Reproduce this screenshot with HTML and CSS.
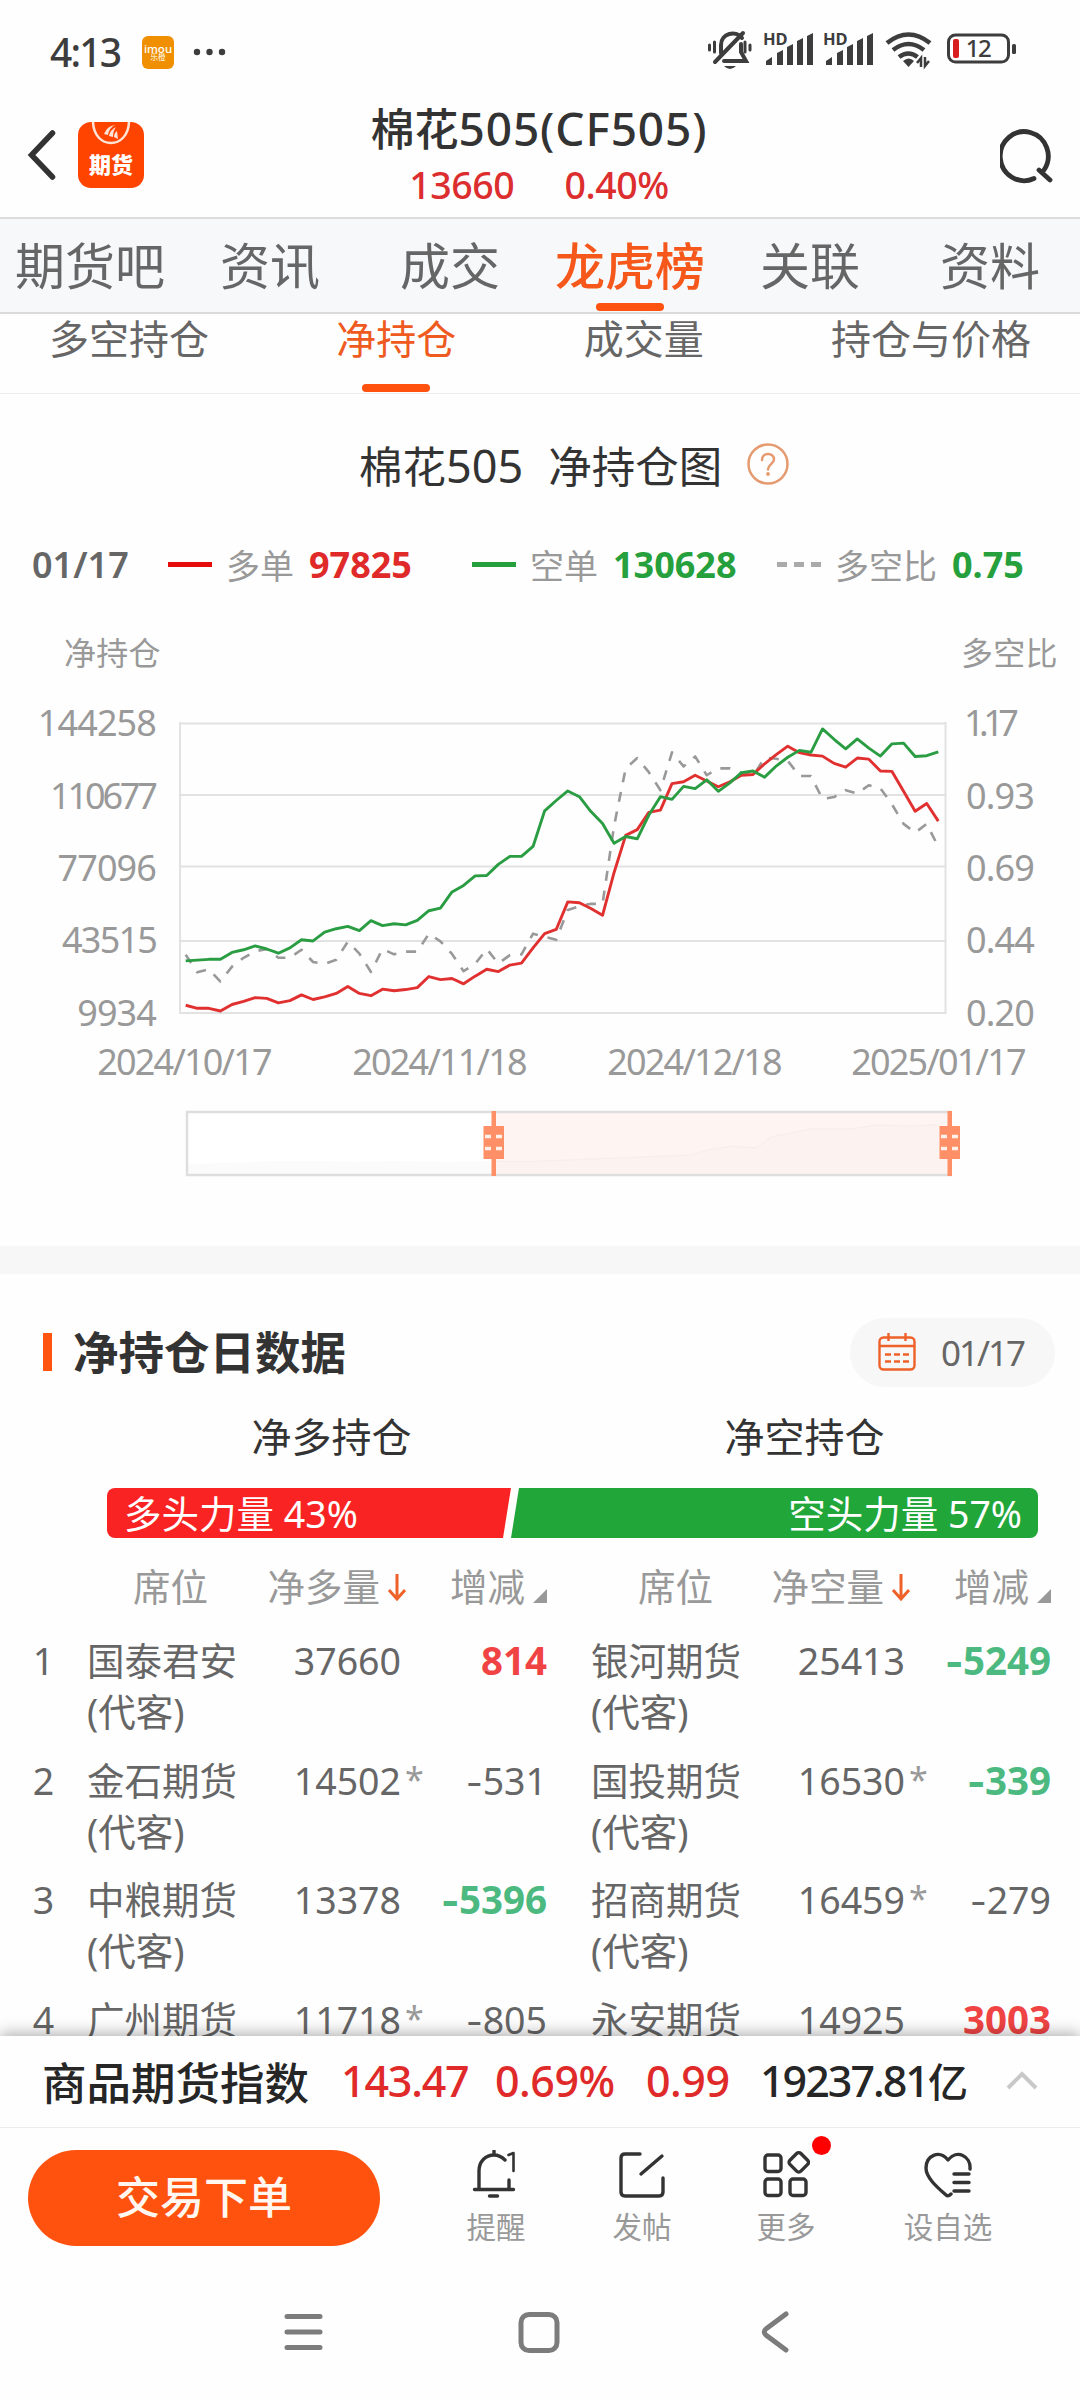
FILE: index.html
```
<!DOCTYPE html>
<html lang="zh-CN">
<head>
    <meta charset="UTF-8">
    <title>棉花505(CF505)</title>
    <link rel="stylesheet" href="styles.css">
</head>
<body>
    <div class="statusbar">
        <span class="time">4:13</span>
        <span class="imou"><b>imou</b><i>乐橙</i></span>
        <svg class="dots" width="34" height="8"><circle cx="4" cy="4" r="3.2"/><circle cx="16.500" cy="4" r="3.200"/><circle cx="29" cy="4" r="3.200"/></svg>
        <svg class="sysicons" width="312" height="50" viewBox="0 -8 312 50">
            <g fill="none" stroke="#3d3d3d" stroke-width="4" stroke-linecap="round">
                <path d="M1.500 14v5M6.500 11v10M37 11v10M42 14v5" stroke-width="3"/>
                <path d="M13 22v-8c0-12 15-15 21-7M33 13v8l5 9H16"/>
                <path d="M7 31L35 2"/>
            </g>
            <path d="M16 35h12q-6 6-12 0z" fill="#3d3d3d"/>
            <text class="hd" x="55" y="14">HD</text>
            <text class="hd" x="115" y="14">HD</text>
            <g fill="#3d3d3d">
                <path id="sig" d="M58 34v-4l6-4v8zM69 34V22l6-3v15zM79 34V16l6-3v21zM89 34v-24l6-3v27zM99 34V5l6-3v32z"/>
                <use href="#sig" x="60"/>
                <path d="M195 30q6-5 11 0l-5.500 6z"/>
            </g>
            <g fill="none" stroke="#3d3d3d" stroke-width="4.500">
                <path d="M179 12q21.500-17 43 0M185 19q15.500-12 31 0M191 26q9.500-7 18.500 0"/>
                <path d="M213 36v-9l-4 5M217 26v9l4-5" stroke-width="2.500"/>
                <rect x="240.500" y="4" width="60" height="27" rx="7" stroke-width="3"/>
            </g>
            <rect x="245" y="8" width="6" height="19" rx="2" fill="#d81e1e"/>
            <rect x="304" y="13" width="4" height="10" rx="1.500" fill="#3d3d3d"/>
            <text class="bat" x="270" y="26" text-anchor="middle">12</text>
        </svg>
    </div>

    <div class="header">
        <svg class="back" width="30" height="52" viewBox="0 0 30 52"><path d="M26.500 4L5.500 26l21 22" fill="none" stroke="#333" stroke-width="5.500" stroke-linecap="round"/></svg>
        <div class="logo">
            <svg width="66" height="24" viewBox="0 0 66 24"><path d="M15 0c1 28 35 28 36 0" fill="none" stroke="#ffe3d6" stroke-width="2.500"/><path d="M26 12q3-8 11-9-6 3-7 10zM31 14q1-6 7-9-3 4-3 10zM36 15q0-4 3-6l1 8z" fill="#ffe3d6"/></svg>
            <span>期货</span>
        </div>
        <div class="quote">
            <div class="name">棉花<span>505(CF505)</span></div>
            <div class="price"><span>13660</span><span>0.40%</span></div>
        </div>
        <svg class="search" width="54" height="56" viewBox="0 0 54 56"><path d="M34 49.500A24 24.500 0 1 1 44 41M39 41l11 10" fill="none" stroke="#333" stroke-width="4.800" stroke-linecap="round" stroke-linejoin="round"/></svg>
    </div>

    <div class="tabs">
        <span>期货吧</span>
        <span>资讯</span>
        <span>成交</span>
        <span class="active">龙虎榜</span>
        <span>关联</span>
        <span>资料</span>
    </div>

    <div class="subtabs">
        <span>多空持仓</span>
        <span class="active">净持仓</span>
        <span>成交量</span>
        <span>持仓与价格</span>
    </div>

    <div class="content">
        <div class="chart-title">
            <span>棉花<em>505</em></span>
            <span>净持仓图</span>
            <svg width="42" height="42" viewBox="0 0 42 42"><circle cx="21" cy="21" r="19.500" fill="none" stroke="#e59a70" stroke-width="2.500"/><path d="M15 17c0-8 12-8 12-.5 0 4-6 5-6 10" fill="none" stroke="#e59a70" stroke-width="2.500" stroke-linecap="round"/><circle cx="21" cy="31" r="1.900" fill="#e59a70"/></svg>
        </div>

        <div class="legend">
            <b class="date">01/17</b>
            <i class="line red-bg"></i><span>多单</span><b class="red v1">97825</b>
            <i class="line green-bg"></i><span>空单</span><b class="green v2">130628</b>
            <i class="line dashed"></i><span>多空比</span><b class="green">0.75</b>
        </div>

        <svg class="chart" width="1080" height="646" viewBox="0 0 1080 646">
            <text x="64" y="65" class="cn">净持仓</text>
            <text x="961" y="65" class="cn">多空比</text>

            <path class="grid" d="M179 123.500H946M179 195H946M179 266.500H946M179 341H946M179 413H946M180 122V414M945.500 122V414"/>

            <g text-anchor="end">
                <text x="156" y="135.500">144258</text>
                <text x="157" y="208.500" textLength="107">110677</text>
                <text x="156" y="280.500">77096</text>
                <text x="157" y="352.500" textLength="95">43515</text>
                <text x="156" y="425.500">9934</text>
            </g>
            <g>
                <text x="964" y="135.500" textLength="54">1.17</text>
                <text x="966" y="208.500">0.93</text>
                <text x="966" y="280.500">0.69</text>
                <text x="966" y="352.500">0.44</text>
                <text x="966" y="425.500">0.20</text>
            </g>
            <g class="days" text-anchor="middle">
                <text x="184" y="475">2024/10/17</text>
                <text x="439" y="475">2024/11/18</text>
                <text x="694" y="475">2024/12/18</text>
                <text x="938" y="475">2025/01/17</text>
            </g>

            <!-- one x unit per trading day -->
            <svg class="plot" x="185.700" y="123.200" width="752.600" height="289.700" viewBox="0 322 65 757" preserveAspectRatio="none">
                <polyline class="ratio" points="0,927 1,973 2,965 3,997 4,958 5,935 6,918 7,912 8,935 9,935 10,914 11,946 12,951 13,940 14,893 15,924 16,972 17,912 18,926 19,919 20,919 21,872 22,892 23,925 24,970 25,951 26,912 27,950 28,928 29,926 30,872 31,880 32,888 33,810 34,800 35,794 36,794 37,590 38,440 39,413 40,450 41,497 42,398 43,435 44,409 45,458 46,440 47,440 48,452 49,460 50,412 51,415 52,420 53,460 54,460 55,520 56,515 57,497 58,506 59,484 60,492 61,534 62,585 63,608 64,585 65,645"/>
                <polyline class="long" points="0,1059 1,1067 2,1067 3,1074 4,1057 5,1049 6,1039 7,1041 8,1053 9,1047 10,1032 11,1044 12,1037 13,1028 14,1010 15,1028 16,1034 17,1017 18,1021 19,1018 20,1013 21,984 22,992 23,989 24,1003 25,983 26,965 27,971 28,954 29,949 30,909 31,872 32,861 33,789 34,791 35,806 36,824 37,712 38,615 39,600 40,555 41,549 42,480 43,475 44,458 45,473 46,488 47,475 48,458 49,456 50,428 51,404 52,382 53,399 54,405 55,408 56,427 57,437 58,413 59,416 60,447 61,448 62,500 63,552 64,532 65,578"/>
                <polyline class="short" points="0,943 1,941 2,939 3,939 4,921 5,914 6,904 7,912 8,923 9,909 10,888 11,891 12,868 13,859 14,853 15,864 16,838 17,851 18,846 19,849 20,837 21,812 22,805 23,763 24,746 25,721 26,720 27,691 28,670 29,670 30,644 31,551 32,524 33,499 34,514 35,553 36,584 37,636 38,618 39,624 40,562 41,514 42,521 43,487 44,493 45,470 46,500 47,478 48,451 49,447 50,463 51,434 52,411 53,393 54,398 55,337 56,364 57,389 58,363 59,387 60,408 61,376 62,374 63,409 64,407 65,397"/>
            </svg>

            <!-- range slider -->
            <rect x="187" y="512" width="763" height="63" fill="#fff"/>
            <path d="M188 564l40-1 45-2 50 0 30 1 40-1 60 1 40-1v14H188z" fill="#fbfbfb"/>
            <rect x="494" y="512" width="456" height="63" fill="#fef5f3"/>
            <path d="M494 561l25 1 50-2 74-3 50-2 10-4 28-5 25 2 15-11 25-5 15-3 40 0 25-4 35 1 25-1 14 5v45H494z" fill="#fcf3f1" stroke="#f9eeeb" stroke-width="1.500"/>
            <rect x="187" y="512" width="763" height="63" fill="none" stroke="#dedede" stroke-width="2.500"/>
            <g id="handle">
                <path d="M491.500 511h4.500v65h-4.500zM483.500 526h20.500v33h-20.500z" fill="#ff8f66"/>
                <path d="M485 536.500h6M496 536.500h6M485 548.500h6M496 548.500h6" stroke="#fff1ea" stroke-width="3.500"/>
            </g>
            <use href="#handle" x="456"/>
        </svg>

        <div class="divider"></div>

        <div class="section-head">
            <h2>净持仓日数据</h2>
            <div class="datepick">
                <svg width="38" height="38" viewBox="0 0 38 38" fill="none" stroke="#ee6128" stroke-width="2.400"><rect x="1.500" y="4.500" width="35" height="32" rx="4"/><path d="M1.500 13h35M10.500 0v8M27.500 0v8"/><path d="M7 21.500h24M7 28.500h24" stroke-dasharray="6 3"/></svg>
                <span>01/17</span>
            </div>
        </div>

        <div class="sides"><span>净多持仓</span><span>净空持仓</span></div>

        <div class="power">
            <div class="bull">多头力量 43%</div>
            <div class="bear">空头力量 57%</div>
        </div>

        <div class="row head">
            <span></span>
            <span class="seat">席位</span>
            <span class="vol">净多量<svg width="20" height="28" viewBox="0 0 20 28"><path d="M10 1v24M2 17l8 9 8-9"/></svg></span>
            <span class="chg">增减<i class="tri"></i></span>
            <span class="seat second">席位</span>
            <span class="vol">净空量<svg width="20" height="28" viewBox="0 0 20 28"><path d="M10 1v24M2 17l8 9 8-9"/></svg></span>
            <span class="chg">增减<i class="tri"></i></span>
        </div>
        <div class="row">
            <span class="no">1</span>
            <span>国泰君安<br>(代客)</span><span class="vol">37660</span><span class="chg up">814</span>
            <span class="second">银河期货<br>(代客)</span><span class="vol">25413</span><span class="chg down"><em>-</em>5249</span>
        </div>
        <div class="row">
            <span class="no">2</span>
            <span>金石期货<br>(代客)</span><span class="vol star">14502</span><span class="chg"><em>-</em>531</span>
            <span class="second">国投期货<br>(代客)</span><span class="vol star">16530</span><span class="chg down"><em>-</em>339</span>
        </div>
        <div class="row">
            <span class="no">3</span>
            <span>中粮期货<br>(代客)</span><span class="vol">13378</span><span class="chg down"><em>-</em>5396</span>
            <span class="second">招商期货<br>(代客)</span><span class="vol star">16459</span><span class="chg"><em>-</em>279</span>
        </div>
        <div class="row">
            <span class="no">4</span>
            <span>广州期货</span><span class="vol star">11718</span><span class="chg"><em>-</em>805</span>
            <span class="second">永安期货</span><span class="vol">14925</span><span class="chg up">3003</span>
        </div>
    </div>

    <div class="index">
        <span class="iname">商品期货指数</span>
        <span class="red i1">143.47</span>
        <span class="red i2">0.69%</span>
        <span class="red i3">0.99</span>
        <span class="i4">19237.81<em>亿</em></span>
        <svg width="32" height="22" viewBox="0 0 32 22"><path d="M2 19L16 5l14 14" fill="none" stroke="#c8c8c8" stroke-width="4"/></svg>
    </div>

    <div class="actions">
        <div class="order">交易下单</div>
        <div class="act a1">
            <svg viewBox="0 0 48 48"><path d="M7 38V21c0-10 7-16 15-16 4 0 8 2 11 5M22 1v4M2.500 39.500h39M37 30v9M17.500 46h8"/><path d="M36.500 5l5-2v18" stroke-width="2.600"/></svg>
            <span>提醒</span>
        </div>
        <div class="act a2">
            <svg viewBox="0 0 48 48"><path d="M22 4H7q-4 0-4 4v34q0 4 4 4h34q4 0 4-4V28M23 24L44 6"/></svg>
            <span>发帖</span>
        </div>
        <div class="act a3">
            <svg viewBox="0 0 48 48"><rect x="3" y="5" width="16" height="16.500" rx="3"/><rect x="3" y="29" width="16" height="16.500" rx="3"/><rect x="28" y="29" width="16" height="16.500" rx="3"/><rect x="29" y="4.500" width="15.500" height="15.500" rx="3" transform="rotate(45 36.700 12.300)"/></svg>
            <span>更多</span>
            <i class="badge"></i>
        </div>
        <div class="act a4">
            <svg viewBox="0 0 48 48"><path d="M46 19C47 6 33-1 24 10 15-1 2 6 2 18c0 10 12 20 20 27q2 2 5-1M30 24h15M30 32.500h15M30 41h15"/></svg>
            <span>设自选</span>
        </div>
    </div>

    <div class="navbar">
        <svg viewBox="0 0 44 44"><path d="M5 6.500h33M5 22h33M5 37.500h33"/></svg>
        <svg viewBox="0 0 44 44"><rect x="3" y="4.500" width="36" height="36" rx="8"/></svg>
        <svg viewBox="0 0 44 44"><path d="M32 4L12.500 18.500q-4.500 3.500 0 7L32 40"/></svg>
    </div>
</body>
</html>
```
FILE: styles.css
```
* {
    box-sizing: border-box;
}

body {
    margin: 0;
    width: 1080px;
    height: 2400px;
    overflow: hidden;
    background-color: #fefefe;
    color: #333;
    font-family: "Noto Sans", "Noto Sans CJK SC", sans-serif;
    display: flex;
    flex-direction: column;
}

svg {
    display: block;
    flex-shrink: 0;
}

i, em {
    font-style: normal;
}

.red { color: #e02a2a; }
.green { color: #25a03c; }
.red-bg { background-color: #e60c0c; }
.green-bg { background-color: #25a03c; }

/* status bar */
.statusbar {
    height: 104px;
    padding: 0 14px 0 50px;
    display: flex;
    align-items: center;
    color: #3d3d3d;
}

.time {
    font-size: 39px;
    font-weight: 500;
    line-height: 40px;
    width: 92px;
    letter-spacing: -1.8px;
}

.imou {
    width: 32px;
    height: 33px;
    border-radius: 6px;
    background-color: #f09000;
    color: #fff;
    text-align: center;
    display: flex;
    flex-direction: column;
    justify-content: center;
}

.imou b {
    font-size: 11.5px;
    font-weight: 500;
    line-height: 9px;
}

.imou i {
    font-size: 7.5px;
    line-height: 8px;
}

.dots {
    margin-left: 19px;
    fill: #3d3d3d;
}

.sysicons {
    margin: -8px 46px 0 auto;
}

.hd {
    font-size: 16.5px;
    font-weight: 700;
    fill: #3d3d3d;
}

.bat {
    font-size: 24px;
    font-weight: 500;
    fill: #3d3d3d;
    letter-spacing: -1.5px;
}

/* header */
.header {
    height: 115px;
    border-bottom: 2px solid #dcdcdc;
    display: flex;
    align-items: flex-start;
    padding: 0 26px 0 26px;
}

.back {
    margin-top: 25px;
}

.logo {
    width: 66px;
    height: 66px;
    margin: 18px 0 0 22px;
    border-radius: 13px;
    background-color: #ff4400;
    color: #fff;
    text-align: center;
}

.logo span {
    display: block;
    font-size: 22px;
    font-weight: 900;
    line-height: 30px;
    margin-top: 3px;
}

.quote {
    flex: 1;
    text-align: center;
    padding-right: 66px;
}

.quote .name {
    font-size: 44px;
    font-weight: 500;
    line-height: 48px;
    height: 52px;
}

.quote .name span {
    font-size: 46px;
    letter-spacing: 0.9px;
}

.price {
    display: flex;
    justify-content: center;
    gap: 50px;
    font-size: 37.5px;
    font-weight: 500;
    line-height: 57px;
    letter-spacing: -0.4px;
    color: #dc2e2e;
}

.search {
    margin-top: 25px;
}

/* tabs */
.tabs {
    height: 95px;
    background-color: #f7f8fa;
    border-bottom: 2px solid #dadada;
    display: flex;
}

.tabs span {
    width: 180px;
    text-align: center;
    font-size: 50px;
    line-height: 95px;
    color: #666;
    position: relative;
}

.tabs .active {
    font-weight: 500;
    color: #f5581a;
}

.active::after {
    content: "";
    position: absolute;
    left: 50%;
    bottom: 1px;
    width: 68px;
    height: 8px;
    margin-left: -34px;
    border-radius: 4px;
    background-color: #ff520e;
}

.subtabs {
    height: 80px;
    border-bottom: 1px solid #ececec;
    padding: 0 49px;
    display: flex;
    justify-content: space-between;
}

.subtabs span {
    position: relative;
    font-size: 40px;
    line-height: 50px;
    color: #666;
}

.subtabs .active {
    color: #ee5a20;
}

/* chart */
.content {
    height: 1642px;
    overflow: hidden;
}

.chart-title {
    height: 140px;
    display: flex;
    align-items: center;
    padding-left: 359px;
    font-size: 43.5px;
}

.chart-title em {
    font-size: 45px;
}

.chart-title span {
    margin-right: 25px;
}

.legend {
    height: 66px;
    display: flex;
    align-items: center;
    padding-left: 32px;
    padding-bottom: 5px;
    font-size: 34px;
    color: #999;
}

.legend b {
    font-size: 36px;
    font-weight: 700;
}

.legend .date {
    width: 136px;
    font-weight: 600;
    color: #666;
    letter-spacing: 0;
}

.legend span {
    margin: 0 15px 0 14px;
}

.v1 { width: 163px; }
.v2 { width: 164px; }

.line {
    width: 44px;
    height: 5px;
}

.dashed {
    background: repeating-linear-gradient(90deg, #aaa 0 10px, transparent 10px 17px);
}

.chart text {
    font-size: 36px;
    letter-spacing: -0.9px;
    fill: #999;
}

.chart .cn {
    font-size: 32px;
    letter-spacing: 0.3px;
}

.chart .days text {
    letter-spacing: -1.8px;
}

.grid {
    fill: none;
    stroke: #e2e2e2;
    stroke-width: 2;
}

.plot {
    overflow: visible;
}

.plot polyline {
    fill: none;
    stroke-width: 2.9;
    stroke-linejoin: round;
    vector-effect: non-scaling-stroke;
}

.plot .ratio {
    stroke: #999;
    stroke-width: 2.6;
    stroke-dasharray: 10 10;
}

.plot .long { stroke: #e03030; }
.plot .short { stroke: #2a9d43; }

.divider {
    height: 28px;
    background-color: #f7f7f7;
}

/* daily data */
.section-head {
    height: 122px;
    padding: 34px 25px 0 43px;
    display: flex;
    justify-content: space-between;
    align-items: center;
}

.section-head h2 {
    margin: 0;
    font-size: 45.5px;
    line-height: 60px;
    font-weight: 700;
    display: flex;
    align-items: center;
}

.section-head h2::before {
    content: "";
    width: 9px;
    height: 38px;
    margin-right: 21px;
    background-color: #ff5511;
}

.datepick {
    width: 205px;
    height: 69px;
    border-radius: 35px;
    background-color: #f7f7f7;
    display: flex;
    align-items: center;
    padding-left: 28px;
    gap: 25px;
    font-size: 35px;
    letter-spacing: -2px;
    color: #666;
}

.sides {
    height: 92px;
    padding-left: 95px;
    display: flex;
    font-size: 40px;
    line-height: 82px;
    text-align: center;
}

.sides span {
    width: 473px;
}

.power {
    height: 50px;
    margin: 0 42px 0 107px;
    border-radius: 8px;
    overflow: hidden;
    display: flex;
    justify-content: space-between;
    color: #fff;
    font-size: 37.5px;
    line-height: 51px;
}

.bull {
    width: 404px;
    padding-left: 17px;
    background-color: #fa2323;
    clip-path: polygon(0 0, 100% 0, 396px 100%, 0 100%);
}

.bear {
    width: 527px;
    padding-right: 16px;
    text-align: right;
    background-color: #21a63a;
    clip-path: polygon(8px 0, 100% 0, 100% 100%, 0 100%);
}

.row {
    height: 119.5px;
    display: grid;
    grid-template-columns: 87px 178px 136px 146px 223px 135px 146px;
    font-size: 37.5px;
    line-height: 51px;
    color: #666;
}

.row.head {
    height: 97px;
    padding-top: 23px;
    align-items: start;
    color: #999;
}

.no {
    text-align: center;
}

.second {
    padding-left: 44px;
}

.vol, .chg {
    text-align: right;
    position: relative;
}

/* stretch the minus sign a little */
.chg em {
    display: inline-block;
    transform: scaleX(1.3);
    transform-origin: right;
    margin-right: 1px;
}

.star::after {
    content: "*";
    position: absolute;
    left: 100%;
    top: -1px;
    margin-left: 4px;
    font-size: 34px;
    color: #999;
}

.up, .down {
    font-size: 38.5px;
    font-weight: 700;
}

.up { color: #f04444; }
.down { color: #4cb980; }

.head .seat { padding-left: 46px; }
.head .second { padding-left: 91px; }

.head .vol, .head .chg {
    display: flex;
    justify-content: flex-end;
    align-items: center;
    height: 51px;
    white-space: nowrap;
}

.head .vol {
    right: -6px;
}

.head .vol svg {
    margin-left: 7px;
    fill: none;
    stroke: #ee6128;
    stroke-width: 3;
}

.tri {
    margin: 18px 0 0 8px;
    border-left: 14px solid transparent;
    border-bottom: 14px solid #999;
}

/* index ticker */
.index {
    position: relative;
    height: 92px;
    border-bottom: 1px solid #ececec;
    background-color: #fefefe;
    box-shadow: 0 -3px 14px rgba(0, 0, 0, 0.3);
    padding: 0 0 3px 42px;
    display: flex;
    align-items: center;
    font-weight: 500;
    color: #262626;
}

.index span {
    font-size: 43px;
    white-space: nowrap;
    letter-spacing: -0.5px;
}

.index .iname {
    width: 299px;
    font-size: 44.5px;
    letter-spacing: 0;
}

.index .i1 { width: 154px; letter-spacing: -1.2px; }
.index .i2 { width: 151px; }
.index .i3 { width: 114px; }
.index .i4 { width: 246px; letter-spacing: -2px; }
.index em { font-size: 40px; }

/* bottom actions */
.actions {
    position: relative;
    height: 141px;
    padding: 22px 0 0 28px;
    background-color: #fefefe;
    display: flex;
}

.order {
    width: 352px;
    height: 96px;
    border-radius: 48px;
    background-color: #ff520e;
    color: #fff7f0;
    font-size: 44px;
    font-weight: 500;
    line-height: 94px;
    text-align: center;
}

.act {
    position: relative;
    width: 144px;
    display: flex;
    flex-direction: column;
    align-items: center;
    font-size: 29.5px;
    line-height: 40px;
    color: #999;
}

.act svg {
    width: 48px;
    height: 48px;
    margin-bottom: 9px;
    fill: none;
    stroke: #333;
    stroke-width: 3.4;
    stroke-linecap: round;
    stroke-linejoin: round;
}

.a1 { margin-left: 44px; }
.a2 { margin-left: 2px; }
.a4 { margin-left: 18px; }

.badge {
    position: absolute;
    left: 98px;
    top: -14px;
    width: 19px;
    height: 19px;
    border-radius: 50%;
    background-color: #ff0000;
}

/* system navigation */
.navbar {
    flex: 1;
    display: flex;
    justify-content: center;
    gap: 192px;
    padding-top: 41px;
}

.navbar svg {
    width: 44px;
    height: 44px;
    fill: none;
    stroke: #7c7c7c;
    stroke-width: 5;
    stroke-linecap: round;
}
```
